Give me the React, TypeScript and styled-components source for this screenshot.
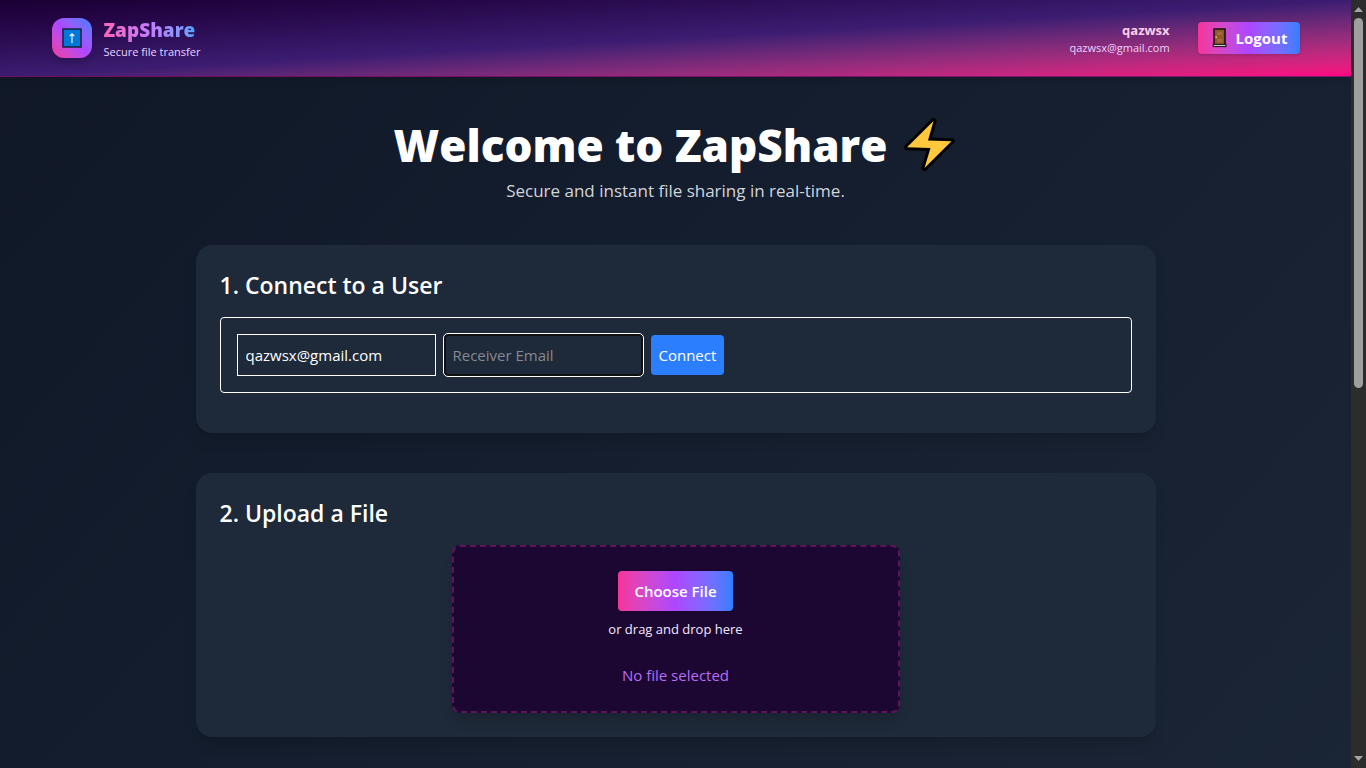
import React, { useState } from "react";
import styled, { createGlobalStyle, css } from "styled-components";

const GlobalStyle = createGlobalStyle`
  *, *::before, *::after { box-sizing: border-box; }
  body {
    margin: 0;
    background: #101828;
    color: #fff;
    font-family: "Segoe UI", "Open Sans", "Noto Sans", sans-serif;
    font-size: 15px;
    line-height: 24px;
  }
  h1, h2, p { margin: 0; }
  button, input { font: inherit; }
`;

const brandGradient = "linear-gradient(to right in oklab, #f6339a, #ad46ff, #2b7fff)";

const Shell = styled.div`
  display: flex;
  height: 100vh;
`;

const Viewport = styled.div`
  flex: 1;
  min-width: 0;
  overflow-y: auto;
  scrollbar-width: none;
`;

const Page = styled.div`
  min-height: 197vh;
  background: linear-gradient(to bottom right in oklab, #101828, #1e2939);
`;

const Header = styled.header`
  background: linear-gradient(to bottom right in oklab, #1a0033, #3b1c71, #ff0080);
  border-bottom: 1px solid rgba(173, 20, 120, 0.6);
  box-shadow: 0 4px 6px rgba(0, 0, 0, 0.1);
`;

const HeaderInner = styled.div`
  display: flex;
  align-items: center;
  justify-content: space-between;
  max-width: 1280px;
  min-height: 76px;
  margin: 0 auto;
  padding: 0 16px;
`;

const Brand = styled.div`
  display: flex;
  align-items: center;
  gap: 12px;
`;

const LogoTile = styled.div`
  display: grid;
  place-items: center;
  width: 40px;
  height: 40px;
  border-radius: 12px;
  background: linear-gradient(to top right in oklab, #f6339a, #ad46ff, #2b7fff);
  box-shadow: 0 4px 6px rgba(0, 0, 0, 0.15);
`;

const BrandName = styled.div`
  width: max-content;
  font-size: 19px;
  font-weight: 800;
  line-height: 28px;
  color: transparent;
  background: linear-gradient(to right in oklab, #fb64b6, #c27aff, #51a2ff);
  background-clip: text;
`;

const SmallText = styled.div`
  font-size: 11px;
  line-height: 16px;
  color: #e9d4ff;
`;

const Account = styled.div`
  display: flex;
  align-items: center;
  gap: 28px;
`;

const Identity = styled.div`
  text-align: right;
`;

const UserName = styled.div`
  font-size: 13px;
  font-weight: 700;
  line-height: 20px;
  color: #fccee8;
`;

const buttonBase = css`
  border: 0;
  border-radius: 4px;
  color: #fff;
  cursor: pointer;
`;

const GradientButton = styled.button<{ $compact?: boolean }>`
  ${buttonBase}
  display: inline-flex;
  align-items: center;
  justify-content: center;
  gap: 6px;
  height: ${(p) => (p.$compact ? 32 : 40)}px;
  padding: 0 ${(p) => (p.$compact ? 12 : 16)}px;
  background: ${brandGradient};
  font-weight: ${(p) => (p.$compact ? 700 : 600)};
  box-shadow: 0 1px 3px rgba(0, 0, 0, 0.15);
`;

const Main = styled.main`
  display: flex;
  flex-direction: column;
  gap: 40px;
  max-width: 992px;
  margin: 0 auto;
  padding: 40px 16px;
`;

const Hero = styled.section`
  display: flex;
  flex-direction: column;
  align-items: center;
  gap: 4px;
  text-align: center;
`;

const Title = styled.h1`
  display: flex;
  align-items: center;
  gap: 16px;
  font-size: 44px;
  font-weight: 800;
  line-height: 56px;
  white-space: nowrap;
`;

const Subtitle = styled.p`
  font-size: 17px;
  line-height: 28px;
  color: #d1d5dc;
`;

const Card = styled.section`
  padding: 24px;
  border-radius: 16px;
  background: #1e2939;
  box-shadow: 0 10px 15px -3px rgba(0, 0, 0, 0.1), 0 4px 6px -4px rgba(0, 0, 0, 0.1);
`;

const CardTitle = styled.h2`
  margin-bottom: 16px;
  font-size: 23px;
  font-weight: 600;
  line-height: 32px;
`;

const ConnectForm = styled.form`
  display: flex;
  flex-wrap: wrap;
  align-items: center;
  gap: 8px;
  margin-bottom: 16px;
  padding: 16px;
  border: 1px solid #fff;
  border-radius: 4px;
`;

const EmailField = styled.input<{ $active?: boolean }>`
  width: 199px;
  height: 42px;
  padding: 0 8px;
  border: 1px solid #fff;
  background: transparent;
  color: #fff;
  outline: none;
  &::placeholder { color: #858990; opacity: 1; }
  ${(p) =>
    p.$active &&
    css`
      padding: 0 7px;
      border: 2px solid #101010;
      border-radius: 4px;
      outline: 1px solid #fff;
    `}
`;

const ConnectButton = styled.button`
  ${buttonBase}
  height: 40px;
  padding: 0 8px;
  background: #2b7fff;
`;

const DropZone = styled.div`
  display: flex;
  flex-direction: column;
  align-items: center;
  max-width: 448px;
  margin: 0 auto;
  padding: 24px;
  border: 2px dashed #5f1459;
  border-radius: 8px;
  background: #1c0732;
  box-shadow: 0 10px 15px -3px rgba(0, 0, 0, 0.1), 0 4px 6px -4px rgba(0, 0, 0, 0.1);
`;

const DropHint = styled.p`
  margin-top: 8px;
  font-size: 13px;
  line-height: 20px;
  color: #f3e8ff;
`;

const FileStatus = styled.p`
  margin-top: 24px;
  color: #b96cf5;
`;

const ScrollRail = styled.div`
  display: flex;
  flex-direction: column;
  align-items: center;
  justify-content: space-between;
  width: 15px;
  padding: 6px 0;
  background: #2c2c2c;
`;

const ScrollThumb = styled.div`
  flex: 0 0 49%;
  width: 9px;
  margin: 6px 0 auto;
  border-radius: 5px;
  background: #9f9f9f;
`;

const UploadGlyph = () => (
  <svg width="20" height="20" viewBox="0 0 20 20" aria-hidden="true">
    <rect x="1" y="1" width="18" height="18" fill="#0078d7" stroke="#14213d" strokeWidth="1.5" />
    <path d="M10 15V6M7.7 8.2 10 5.8l2.3 2.4" fill="none" stroke="#fff" strokeWidth="1.1" />
  </svg>
);

const DoorGlyph = () => (
  <svg width="20" height="20" viewBox="0 0 20 20" aria-hidden="true">
    <rect x="4" y="1" width="11" height="17" fill="#8e562e" stroke="#20120d" strokeWidth="1.6" />
    <path d="M7 3.8h5.6v3.4H7zM7 10.6h5.6v4H7z" fill="#a56a3c" stroke="#945c33" strokeWidth=".6" />
    <circle cx="6.2" cy="9.2" r="0.9" fill="#ffc83d" />
    <rect x="3.2" y="16.4" width="12.8" height="2.2" fill="#cdd0d3" stroke="#17100f" strokeWidth="1" />
  </svg>
);

const BoltGlyph = () => (
  <svg width="54" height="56" viewBox="0 0 54 56" aria-hidden="true">
    <path
      d="M30.5 4 4 30.3 27.5 31 21.5 51 48.5 24.2 25 23.5Z"
      fill="#ffc83d"
      stroke="#000"
      strokeWidth="6"
      strokeLinejoin="round"
      paintOrder="stroke"
    />
  </svg>
);

const ScrollArrow = ({ down = false }: { down?: boolean }) => (
  <svg width="9" height="6" viewBox="0 0 9 6" aria-hidden="true">
    <path d={down ? "M0 0h9L4.5 5Z" : "M0 6h9L4.5 1Z"} fill="#a5a5a5" />
  </svg>
);

export default function App() {
  const [receiver, setReceiver] = useState("");

  return (
    <>
      <GlobalStyle />
      <Shell>
        <Viewport>
          <Page>
            <Header>
              <HeaderInner>
                <Brand>
                  <LogoTile>
                    <UploadGlyph />
                  </LogoTile>
                  <div>
                    <BrandName>ZapShare</BrandName>
                    <SmallText>Secure file transfer</SmallText>
                  </div>
                </Brand>
                <Account>
                  <Identity>
                    <UserName>qazwsx</UserName>
                    <SmallText>qazwsx@gmail.com</SmallText>
                  </Identity>
                  <GradientButton type="button" $compact>
                    <DoorGlyph />
                    Logout
                  </GradientButton>
                </Account>
              </HeaderInner>
            </Header>
            <Main>
              <Hero>
                <Title>
                  Welcome to ZapShare <BoltGlyph />
                </Title>
                <Subtitle>Secure and instant file sharing in real-time.</Subtitle>
              </Hero>
              <Card>
                <CardTitle>1. Connect to a User</CardTitle>
                <ConnectForm onSubmit={(e) => e.preventDefault()}>
                  <EmailField type="email" aria-label="Your email" value="qazwsx@gmail.com" readOnly />
                  <EmailField
                    type="email"
                    aria-label="Receiver email"
                    placeholder="Receiver Email"
                    value={receiver}
                    onChange={(e) => setReceiver(e.target.value)}
                    $active
                  />
                  <ConnectButton type="submit">Connect</ConnectButton>
                </ConnectForm>
              </Card>
              <Card>
                <CardTitle>2. Upload a File</CardTitle>
                <DropZone>
                  <GradientButton type="button">Choose File</GradientButton>
                  <DropHint>or drag and drop here</DropHint>
                  <FileStatus>No file selected</FileStatus>
                </DropZone>
              </Card>
            </Main>
          </Page>
        </Viewport>
        <ScrollRail aria-hidden="true">
          <ScrollArrow />
          <ScrollThumb />
          <ScrollArrow down />
        </ScrollRail>
      </Shell>
    </>
  );
}
